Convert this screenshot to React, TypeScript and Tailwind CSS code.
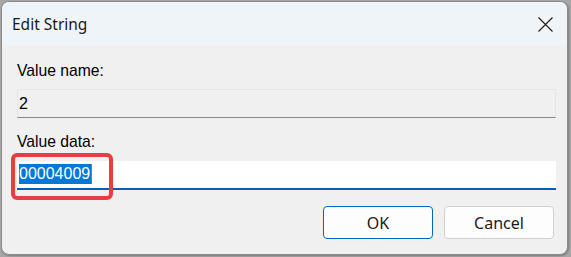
import React from "react";

export default function App() {
  return (
    <div className="w-[571px] h-[257px] bg-[#a7a7a7] pl-[1px] pt-[1px] overflow-hidden">
      <div className="w-[567px] h-[254px] rounded-[8px] border border-[#8c8c8c] bg-[#f0f0f0] overflow-hidden flex flex-col shadow-[1px_1px_2px_rgba(0,0,0,0.25)]">
        <div className="h-[43px] bg-[#eff4f9] flex items-center justify-between pl-[10px] pr-[14px]">
          <span className="text-[15.5px] text-[#1a1a1a] leading-[20px]" style={{ fontFamily: '"Segoe UI", "Noto Sans", sans-serif' }}>
            Edit String
          </span>
          <svg width="15" height="15" viewBox="0 0 15 15" className="mt-[1px]">
            <path d="M0.5 0.5 L14.5 14.5 M14.5 0.5 L0.5 14.5" stroke="#1a1a1a" strokeWidth="1.1" fill="none" />
          </svg>
        </div>
        <div className="flex flex-col px-[15px]" style={{ fontFamily: '"Liberation Sans", Arial, sans-serif' }}>
          <div className="mt-[17px] text-[15.7px] leading-[18px] text-black">Value name:</div>
          <div className="mt-[9px] w-[539px] h-[29px] bg-[#f0f0f0] border border-[#e6e6e6] border-b-[#878787] flex items-center pl-[1px]">
            <span className="text-[16px] leading-[18px] text-black">2</span>
          </div>
          <div className="mt-[15px] text-[15.7px] leading-[18px] text-black">Value data:</div>
          <div className="relative mt-[10px] w-[539px] h-[29px] bg-white border-b-2 border-[#005fb8] flex items-center pl-[2px] pb-[2px]">
            <span className="text-[16px] leading-[20px] bg-[#0078d7] text-white pr-[1px]">00004009</span>
            <span className="w-[1px] h-[20px] bg-[#c86b18]"></span>
            <div className="absolute left-[-6px] top-[-8px] w-[102px] h-[47px] border-[4px] border-[#e5403f] rounded-[6px]"></div>
          </div>
          <div className="mt-[16px] w-[537px] flex justify-end gap-[11px]" style={{ fontFamily: '"Segoe UI", "Noto Sans", sans-serif' }}>
            <button className="w-[110px] h-[33px] rounded-[4px] bg-[#fdfdfd] border border-[#0067c0] text-[16px] text-[#1a1a1a]">
              OK
            </button>
            <button className="w-[110px] h-[33px] rounded-[4px] bg-[#fdfdfd] border border-[#d0d0d0] text-[16px] text-[#1a1a1a]">
              Cancel
            </button>
          </div>
        </div>
      </div>
    </div>
  );
}
